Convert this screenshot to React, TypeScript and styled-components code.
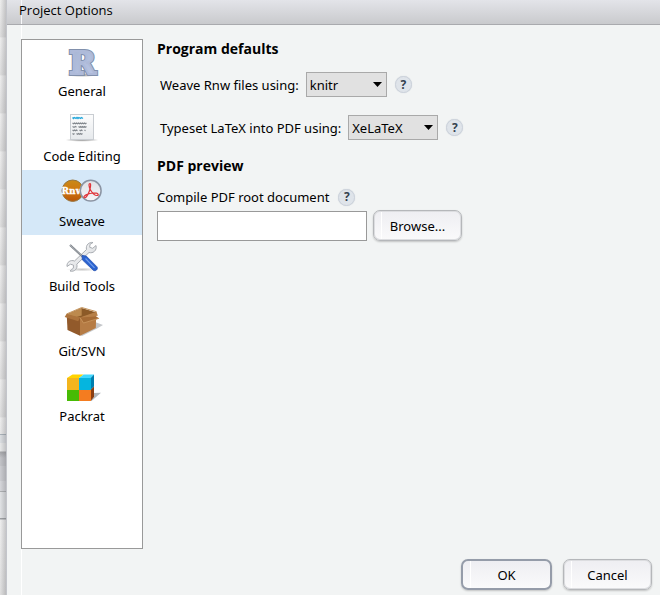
import React, { useState } from "react";
import styled, { createGlobalStyle, css } from "styled-components";

const GlobalStyle = createGlobalStyle`
  * { box-sizing: border-box; }
  body {
    margin: 0;
    background: #f2f4f4;
    color: #000;
    font-family: "Noto Sans", "Open Sans", sans-serif;
    font-size: 13px;
    line-height: 18px;
  }
  button, input, select { font: inherit; color: inherit; }
`;

const Screen = styled.div`
  display: grid;
  grid-template-columns: 6px minmax(0, 1fr);
  min-height: 100vh;
`;

const Backdrop = styled.div`
  background:
    linear-gradient(90deg, transparent, rgba(90, 90, 96, 0.28)),
    linear-gradient(
      transparent 434px, #aab3ba 434px 435px, #dcdfe2 435px 443px, #e8e9e9 443px 451px,
      #a5a6a9 452px, #c3c4c8 458px 466px, #cccdd1 466px 481px, #d6d7db 481px 491px,
      #aeb0b2 491px 492px, #e1e3e5 492px 518px, #9da0a3 518px 519px, #f0f0f0 520px, #e0e0e0
    ),
    repeating-linear-gradient(#efefef 0, #dedede 37px, #f2f2f2 38px);
`;

const Dialog = styled.form`
  display: flex;
  flex-direction: column;
  border-left: 1px solid #c3c5cb;
  background: linear-gradient(#fff, #fff) 14px 0 / 1px 100% no-repeat #f2f4f4;
`;

const TitleBar = styled.header`
  height: 25px;
  padding: 1px 12px 0;
  border-bottom: 1px solid #a9aaae;
  background:
    linear-gradient(#f8f8fa, #f8f8fa) 14px 0 / 1px 100% no-repeat,
    linear-gradient(#e3e4e9, #c9cacd);
`;

const Title = styled.h1`
  margin: 0;
  font-family: "Open Sans", "Noto Sans", sans-serif;
  font-size: 13px;
  font-weight: 400;
  line-height: 18px;
`;

const Body = styled.div`
  flex: 1;
  display: flex;
  gap: 14px;
  padding: 14px 14px 0;
`;

const Sections = styled.nav`
  flex: 0 0 122px;
  display: flex;
  flex-direction: column;
  border: 1px solid #999;
  background: #fff;
`;

const SectionButton = styled.button<{ $active: boolean }>`
  display: flex;
  flex-direction: column;
  align-items: center;
  height: 65px;
  padding: 4px 0 0;
  gap: 2px;
  border: 0;
  background: ${({ $active }) => ($active ? "#d5e8f8" : "transparent")};
`;

const Icon = styled.svg`
  display: block;
  width: 48px;
  height: 36px;
  overflow: visible;
`;

const Panel = styled.main`
  flex: 1;
  min-width: 0;
`;

const Heading = styled.h2`
  margin: 0;
  font-family: "Open Sans", "Noto Sans", sans-serif;
  font-size: 14px;
  font-weight: 700;
  line-height: 20px;
`;

const OptionRow = styled.div`
  display: flex;
  align-items: center;
  height: 25px;
  margin: 0 0 18px 3px;
`;

const Options = styled.div`
  padding-top: 13px;
  margin-bottom: -2px;
`;

const LabelRow = styled.div`
  display: flex;
  align-items: center;
  gap: 9px;
  margin-top: 11px;
  height: 20px;
`;

const SelectBox = styled.span<{ $width: number }>`
  display: grid;
  align-items: center;
  width: ${({ $width }) => $width}px;
  margin: 0 8px 0 7px;
  > * { grid-area: 1 / 1; }
  > svg { justify-self: end; margin-right: 5px; pointer-events: none; }
`;

const Select = styled.select`
  appearance: none;
  width: 100%;
  height: 25px;
  padding: 0 3px;
  border: 1px solid #a9a9a9;
  border-radius: 0;
  background: #e1e1e1;
`;

const HelpButton = styled.button`
  display: grid;
  place-items: center;
  width: 17px;
  height: 17px;
  padding: 0;
  border: 1px solid #cdd3dc;
  border-radius: 50%;
  background: #dfe4ea;
  box-shadow: 0 0 1px #c8ced6;
  color: #34414f;
  font-size: 12px;
  font-weight: 700;
  line-height: 14px;
`;

const FileRow = styled.div`
  display: flex;
  align-items: center;
  gap: 6px;
  margin-top: 3px;
`;

const PathInput = styled.input`
  width: 210px;
  min-width: 0;
  height: 30px;
  padding: 0 4px;
  border: 1px solid #999;
  background: #fff;
`;

const Button = styled.button<{ $primary?: boolean }>`
  min-width: 89px;
  height: 31px;
  padding: 0 12px;
  border: 1px solid #b5b7ba;
  border-radius: 7px;
  background:
    linear-gradient(#fff, #fff) 7px 0 / 1px 100% no-repeat,
    linear-gradient(#eeeef2, #fafafb);
  box-shadow: inset 0 0 0 1px #dcdde0, 0 1px 2px rgba(0, 0, 0, 0.2);
  ${({ $primary }) =>
    $primary &&
    css`
      min-width: 91px;
      border: 2px solid #959ca9;
      box-shadow: 0 1px 2px rgba(0, 0, 0, 0.2);
    `}
`;

const Footer = styled.footer`
  display: flex;
  justify-content: flex-end;
  gap: 11px;
  padding: 10px 8px 5px;
`;

const GeneralIcon = () => (
  <Icon viewBox="0 0 48 36" aria-hidden="true">
    <defs>
      <linearGradient id="r-fill" x1="0" y1="0" x2="1" y2="1">
        <stop offset="0" stopColor="#a5b4d2" />
        <stop offset="1" stopColor="#bcc7e6" />
      </linearGradient>
      <radialGradient id="soft">
        <stop offset="0" stopColor="#555" stopOpacity=".65" />
        <stop offset="1" stopColor="#555" stopOpacity="0" />
      </radialGradient>
    </defs>
    <ellipse cx="24" cy="31" rx="16" ry="2" fill="url(#soft)" />
    <g textAnchor="middle" fontFamily="DejaVu Serif" fontWeight="700" fontSize="32">
      <text x="24.500" y="29.500" fill="#8190ac" stroke="#8190ac" strokeWidth="4">R</text>
      <text x="24.500" y="29.500" fill="url(#r-fill)" stroke="#aebad9" strokeWidth="2">R</text>
    </g>
  </Icon>
);

const EditingIcon = () => (
  <Icon viewBox="0 0 48 36" aria-hidden="true">
    <defs>
      <linearGradient id="page" x1="0" y1="0" x2="0" y2="1">
        <stop offset="0" stopColor="#fdfdfd" />
        <stop offset="1" stopColor="#e6e9ec" />
      </linearGradient>
    </defs>
    <ellipse cx="24" cy="31" rx="17" ry="1.8" fill="url(#soft)" />
    <rect x="12.5" y="5.5" width="23" height="25" fill="url(#page)" stroke="#c9cdd2" />
    <path d="M14.5 8.500l1 1 1-1 1.500 1 1-1 1 1 1-1 1.500 1 1-1 1.500 1" fill="none" stroke="#27a9dc" strokeWidth="1.300" />
    <g fill="none" stroke="#84898f" strokeWidth="1.100">
      <path d="M14.500 14l1 .8 1-.8 1 .8 1-.8 1 .8 1-.8 1 .8 1-.8 1 .8 1-.8 1 .8 1-.8 1 .8 1-.8" />
      <path d="M14.500 17.500l1.500.8 1.500-.8 1 .8m2-.8 1 .8 1-.8 1 .8 1-.8 1 .8 1-.8 1 .8 1-.8" />
      <path d="M14.500 21l1 .8 1-.8 1 .8 1-.8 1 .8m2-.8 1 .8 1-.8 1 .8m2-.8 1 .8" />
      <path d="M14.500 24.500l1 .8 1-.8m2 0 1 .8 1-.8 1 .8 1-.8 1 .8 1-.8" />
    </g>
  </Icon>
);

const SweaveIcon = () => (
  <Icon viewBox="0 0 48 36" aria-hidden="true">
    <defs>
      <linearGradient id="rnw" x1="0" y1="0" x2="0" y2="1">
        <stop offset="0" stopColor="#c98a18" />
        <stop offset=".55" stopColor="#cf7410" />
        <stop offset="1" stopColor="#b85608" />
      </linearGradient>
      <linearGradient id="pdf" x1="0" y1="0" x2="0" y2="1">
        <stop offset="0" stopColor="#dfe1e6" />
        <stop offset="1" stopColor="#f6f6f8" />
      </linearGradient>
    </defs>
    <circle cx="14.700" cy="16.700" r="10.700" fill="url(#rnw)" stroke="#96763f" />
    <text
      x="14.500" y="20" textAnchor="middle" fontFamily="DejaVu Serif" fontWeight="700"
      fontSize="9" fill="#fff" stroke="#fff" strokeWidth=".3"
    >Rnw</text>
    <circle cx="32.700" cy="16.700" r="10.400" fill="url(#pdf)" stroke="#8b94a3" strokeWidth="1.500" />
    <path
      d="M32 9.500c-1.500 0-1.200 3.200.4 6.200 1.700 3.200 4.500 5.800 6.600 5.800 2 0 1.500-1.900-.8-2.300-3-.5-7.500.3-10.200 1.700-2 1-2.600 2.600-1.600 2.800 1.400.3 3.700-3.400 4.900-6.500 1.300-3.400 1.800-7.700.7-7.700z"
      fill="none" stroke="#e0353a" strokeWidth="1.200"
    />
  </Icon>
);

const ToolsIcon = () => (
  <Icon viewBox="0 0 48 36" aria-hidden="true">
    <defs>
      <linearGradient id="steel" x1="0" y1="0" x2="1" y2="1">
        <stop offset="0" stopColor="#fff" />
        <stop offset="1" stopColor="#cfd2d6" />
      </linearGradient>
    </defs>
    <ellipse cx="24" cy="30.500" rx="16" ry="2" fill="url(#soft)" opacity=".5" />
    <path
      d="M35 3.500c-4-.6-7.500 2.500-6.500 7L16.500 22c-3.800-1.500-8 1-7.500 5.500l3.500-2.300 3 1-.2 3L12 32c4.500 1.300 8-2.500 6.800-6.800L31 13.500c4 1.200 8.200-2 7-7l-3.300 2.800-3-1 .3-3z"
      fill="url(#steel)" stroke="#a0a5aa" strokeWidth=".9" strokeLinejoin="round"
    />
    <path d="M12 6l13 12" stroke="#777d84" strokeWidth="2" />
    <path d="M12 6l13 12" stroke="#c5c9cd" strokeWidth=".7" />
    <path d="M24 16.300l4.300.8 10.600 10.600c1.800 2.400-1.600 5.200-3.700 3.500L24.300 20.800z" fill="#2a62cf" stroke="#244fae" strokeWidth=".7" />
    <path d="M27.500 19.500l9 9.300" stroke="#6f9cec" strokeWidth="1.200" />
  </Icon>
);

const BoxIcon = () => (
  <Icon viewBox="0 0 48 36" aria-hidden="true">
    <path d="M37 18l8 3-6 3.500L24 32l-3-1z" fill="#8b9095" opacity=".5" />
    <path d="M8.500 10.500L23.700 4l14.800 4.500L22 15z" fill="#8c5a27" />
    <path d="M8.500 10.500L23.700 4v7.500L15 14z" fill="#bd8a4e" />
    <path d="M8.700 10.500L22 14v17.700L9.500 26z" fill="#925a2b" />
    <path d="M22 14l16.300-5.500-.5 15.500L22 31.700z" fill="#b67c45" />
    <path d="M8.500 10L6.700 13l13.500 4.200 2-3.700z" fill="#ad733c" />
    <path d="M22 13.500l16.300-1 3 2-15.800 4.500z" fill="#a56b35" />
    <path d="M8.500 10L23.700 3.500l14.800 4.200" fill="none" stroke="#c3935c" strokeWidth="1" />
    <path d="M38.500 7.700l1.300 4-18 1.800" fill="#b78048" />
    <path d="M22 13.500l3.500 5.500 15.500-4.700" fill="none" stroke="#cd9a62" strokeWidth=".8" />
  </Icon>
);

const PackratIcon = () => (
  <Icon viewBox="0 0 48 36" aria-hidden="true">
    <path d="M35 24l8-.2L33.500 32H24z" fill="#7e8790" opacity=".6" />
    <path d="M9 9l5.500-3.500h11.200L21 9z" fill="#ffd400" />
    <path d="M21 9l4.700-3.500H36L32.700 9z" fill="#42d8ff" />
    <path d="M32.700 9L36 5.500v12l-3.300 3.200z" fill="#007eae" />
    <path d="M32.700 20.700l3.300-3.200v10.300L32.700 32z" fill="#8b3e12" />
    <path d="M9 9h12v12H9z" fill="#f3b51d" />
    <path d="M21 9h12v12H21z" fill="#05b5df" />
    <path d="M9 21h12v11H9z" fill="#47bb05" />
    <path d="M21 21h12v11H21z" fill="#f47c20" />
  </Icon>
);

const sections = [
  { name: "General", Drawing: GeneralIcon },
  { name: "Code Editing", Drawing: EditingIcon },
  { name: "Sweave", Drawing: SweaveIcon },
  { name: "Build Tools", Drawing: ToolsIcon },
  { name: "Git/SVN", Drawing: BoxIcon },
  { name: "Packrat", Drawing: PackratIcon },
];

interface ChoiceProps {
  id: string;
  label: string;
  width: number;
  options: string[];
}

const Choice = ({ id, label, width, options }: ChoiceProps) => (
  <OptionRow>
    <label htmlFor={id}>{label}</label>
    <SelectBox $width={width}>
      <Select id={id}>
        {options.map((o) => <option key={o}>{o}</option>)}
      </Select>
      <svg width="9" height="5" viewBox="0 0 9 5" aria-hidden="true">
        <path d="M0 0h9L4.500 5z" />
      </svg>
    </SelectBox>
    <HelpButton type="button" aria-label={`Help: ${label}`}>?</HelpButton>
  </OptionRow>
);

export default function App() {
  const [active, setActive] = useState("Sweave");
  return (
    <>
      <GlobalStyle />
      <Screen>
        <Backdrop />
        <Dialog onSubmit={(e: React.FormEvent) => e.preventDefault()}>
          <TitleBar><Title>Project Options</Title></TitleBar>
          <Body>
            <Sections>
              {sections.map(({ name, Drawing }) => (
                <SectionButton
                  key={name} type="button" $active={name === active}
                  aria-pressed={name === active} onClick={() => setActive(name)}
                >
                  <Drawing />
                  {name}
                </SectionButton>
              ))}
            </Sections>
            <Panel>
              <Heading>Program defaults</Heading>
              <Options>
                <Choice id="weave" label="Weave Rnw files using:" width={81} options={["knitr", "Sweave"]} />
                <Choice id="typeset" label="Typeset LaTeX into PDF using:" width={90} options={["XeLaTeX", "pdfLaTeX"]} />
              </Options>
              <Heading>PDF preview</Heading>
              <LabelRow>
                <label htmlFor="root-doc">Compile PDF root document</label>
                <HelpButton type="button" aria-label="Help: root document">?</HelpButton>
              </LabelRow>
              <FileRow>
                <PathInput id="root-doc" type="text" />
                <Button type="button">Browse...</Button>
              </FileRow>
            </Panel>
          </Body>
          <Footer>
            <Button type="submit" $primary>OK</Button>
            <Button type="button">Cancel</Button>
          </Footer>
        </Dialog>
      </Screen>
    </>
  );
}
